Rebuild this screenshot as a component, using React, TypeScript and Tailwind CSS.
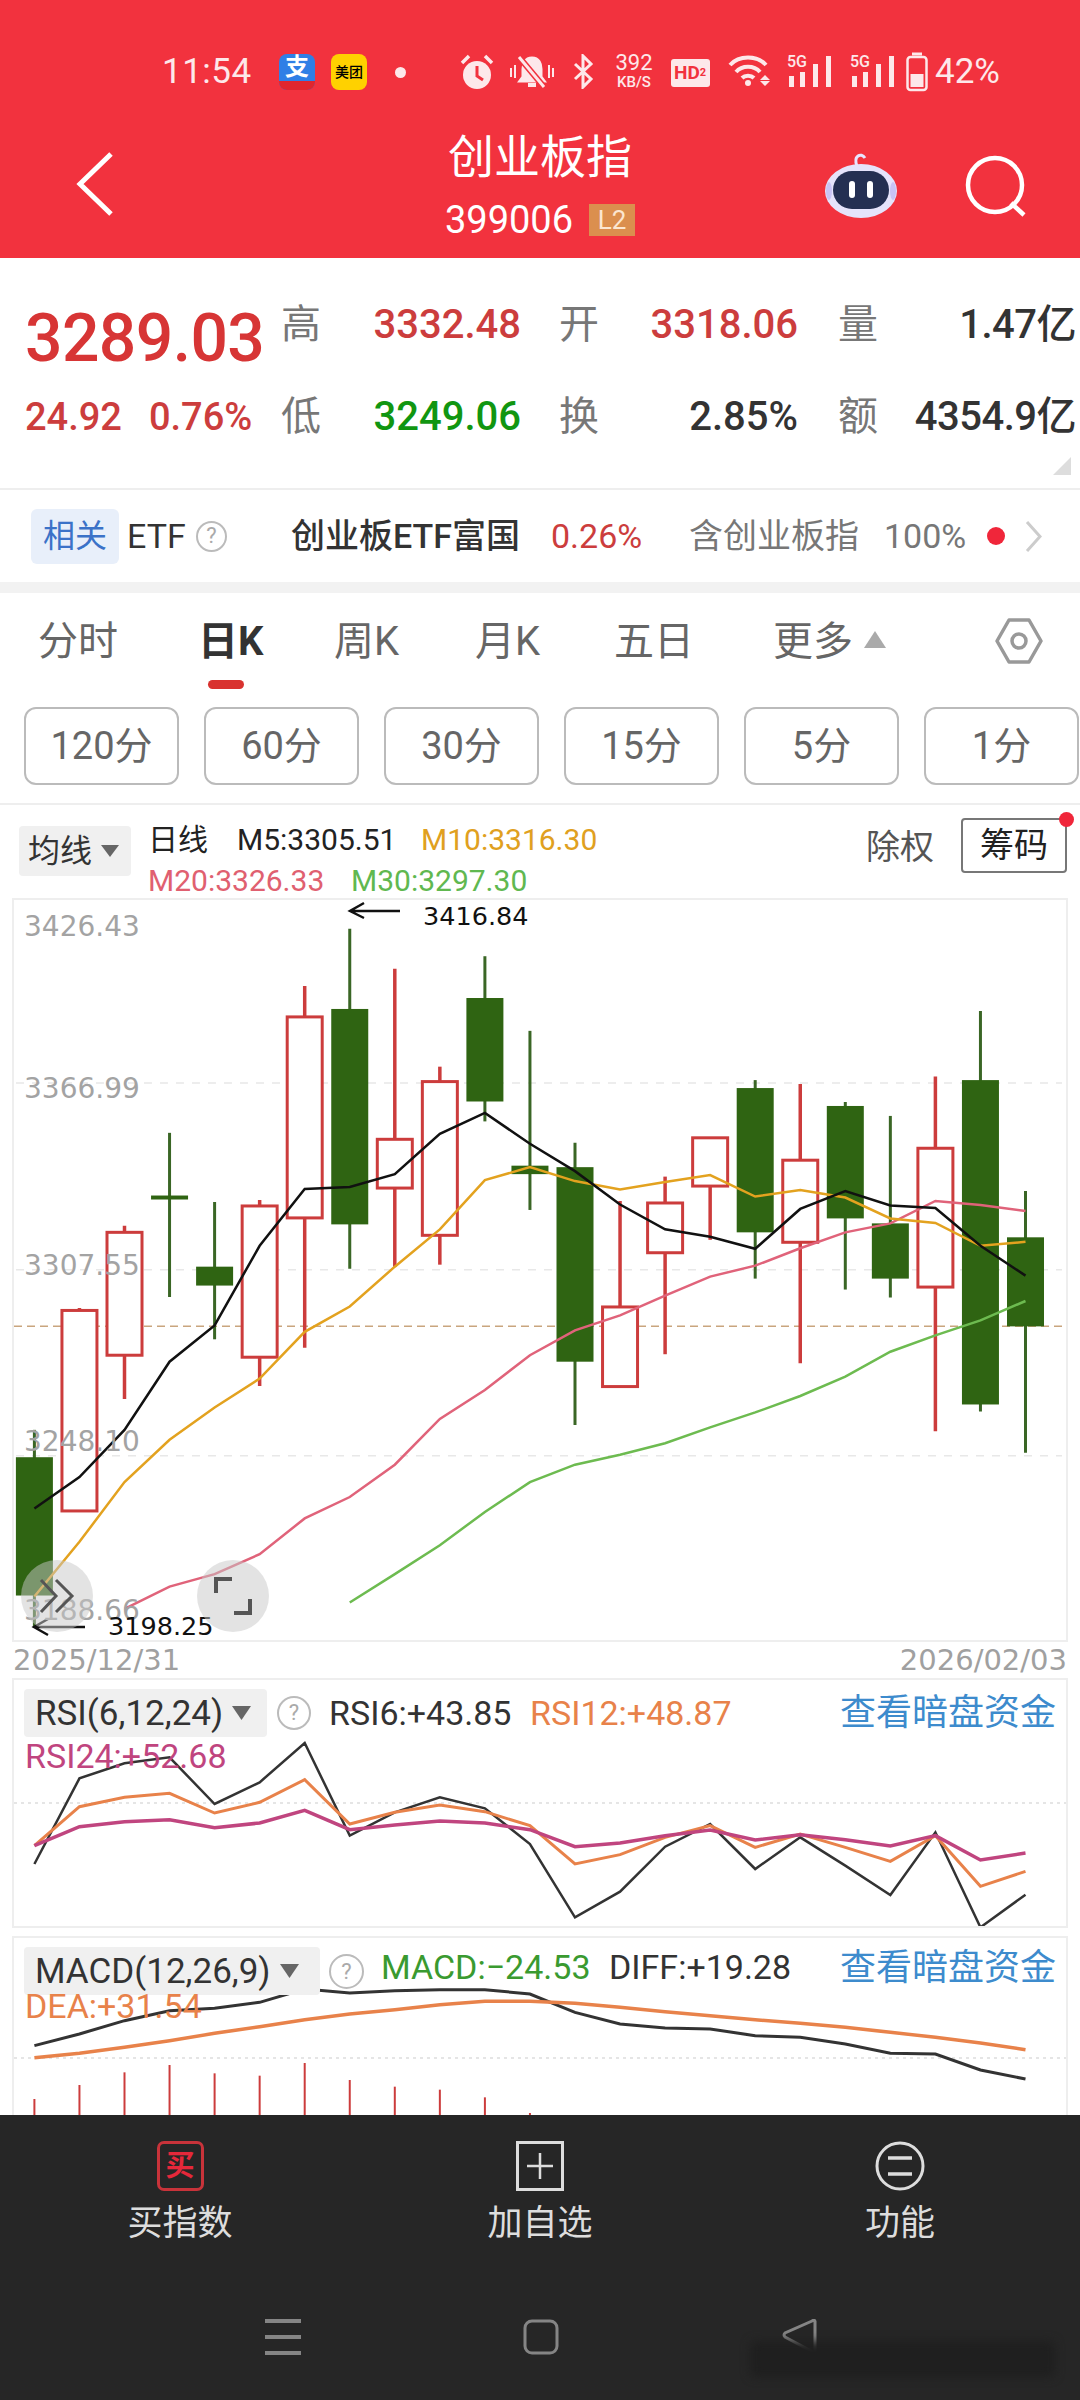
import React from "react";

const cx = (i: number) => 34.4 + 45.05 * i;
const cy = (z: number) => 900 + z / 2.01;

// [open-top, body-bottom, wick-top, wick-bottom, isRed]
const candles: [number, number, number, number, boolean][] = [
  [1120, 1398, 1065, 1463, false],
  [825, 1228, 820, 1228, true],
  [668, 915, 655, 1003, true],
  [594, 602, 468, 798, false],
  [737, 775, 607, 883, false],
  [615, 919, 603, 977, true],
  [235, 639, 173, 900, true],
  [219, 652, 58, 741, false],
  [481, 579, 138, 737, true],
  [365, 674, 335, 733, true],
  [197, 405, 113, 445, false],
  [534, 551, 263, 623, false],
  [537, 928, 488, 1055, false],
  [818, 978, 605, 978, true],
  [609, 709, 556, 913, true],
  [478, 575, 478, 683, true],
  [378, 668, 362, 761, false],
  [523, 688, 370, 931, true],
  [414, 640, 406, 783, false],
  [650, 761, 434, 799, false],
  [499, 778, 355, 1068, true],
  [362, 1014, 223, 1028, false],
  [678, 857, 585, 1111, false],
];

const m5 = [1223, 1160, 1065, 928, 855, 695, 581, 577, 551, 470, 428, 490, 545, 612, 662, 677, 701, 621, 585, 614, 619, 695, 755];
const m10 = [1400, 1290, 1170, 1085, 1020, 962, 868, 817, 737, 662, 563, 537, 565, 582, 567, 553, 596, 583, 598, 640, 649, 695, 687];
const m20 = [1425, 1380, 1355, 1315, 1243, 1200, 1135, 1043, 985, 915, 865, 835, 795, 757, 735, 700, 668, 650, 605, 613, 625];
const m30 = [1412, 1355, 1297, 1230, 1170, 1135, 1115, 1092, 1060, 1030, 997, 958, 908, 875, 845, 806];

const rsi6 = [585, 328, 283, 265, 405, 340, 222, 500, 430, 385, 418, 525, 745, 668, 533, 465, 600, 505, 590, 678, 490, 775, 677];
const rsi12 = [530, 413, 385, 373, 432, 400, 332, 465, 430, 408, 428, 470, 585, 557, 505, 470, 535, 495, 535, 577, 500, 652, 607];
const rsi24 = [530, 473, 458, 452, 476, 462, 424, 482, 468, 456, 462, 482, 533, 522, 500, 483, 513, 497, 512, 531, 500, 573, 552];
const diff = [1130, 1095, 1055, 1025, 1018, 1000, 960, 972, 965, 962, 962, 975, 1030, 1065, 1077, 1080, 1100, 1105, 1125, 1153, 1155, 1203, 1230];
const dea = [1166, 1153, 1135, 1115, 1093, 1073, 1052, 1035, 1022, 1007, 997, 997, 1003, 1015, 1028, 1040, 1052, 1063, 1075, 1090, 1105, 1122, 1142];
const macd = [1290, 1248, 1210, 1188, 1213, 1220, 1182, 1233, 1253, 1262, 1285, 1332];

const OX = 14;
const OY = 900;
const mainPts = (a: number[], start: number) =>
  a.map((z, k) => `${cx(k + start) - OX},${cy(z) - OY}`).join(" ");
const rsiY = (z: number) => 1670 + z / 3 - 1681;
const rsiPts = (a: number[]) => a.map((z, i) => `${cx(i) - OX},${rsiY(z)}`).join(" ");
const macdY = (z: number) => 1670 + z / 3 - 1939;
const macdPts = (a: number[]) => a.map((z, i) => `${cx(i) - OX},${macdY(z)}`).join(" ");

function Help({ size = 32 }: { size?: number }) {
  return (
    <span
      className="flex items-center justify-center rounded-full border-2 border-[#bbbbbb] text-[#aaaaaa] text-[22px] leading-none shrink-0"
      style={{ width: size, height: size }}
    >
      ?
    </span>
  );
}

function StatusBar() {
  return (
    <div className="h-[125px] flex items-start pt-[53px] pl-[162px] text-[#fde8ea]">
      <span className="text-[35px] leading-[38px] w-[117px] tracking-[0.5px]">11:54</span>
      <span className="relative w-[36px] h-[36px] rounded-[8px] bg-[#2f7fe6] overflow-hidden flex justify-center mt-[1px]">
        <span className="text-white text-[24px] leading-[26px] font-bold">支</span>
        <span className="absolute left-0 right-0 bottom-0 h-[9px] bg-[#e0262e]" />
      </span>
      <span className="w-[36px] h-[36px] ml-[16px] rounded-[8px] bg-[#ffd100] text-black text-[14px] leading-[36px] text-center mt-[1px] font-medium">
        美团
      </span>
      <span className="w-[11px] h-[11px] ml-[28px] mt-[14px] rounded-full bg-[#fde8ea]" />
      <svg className="ml-[54px] mt-[1px]" width="34" height="36" viewBox="0 0 34 36" fill="#fde8ea">
        <circle cx="17" cy="21" r="14" />
        <path d="M17 12v10l6 4" stroke="#f2323e" strokeWidth="3" fill="none" />
        <path d="M2 9 L9 2 M32 9 L25 2" stroke="#fde8ea" strokeWidth="3.5" />
      </svg>
      <svg className="ml-[14px] mt-[1px]" width="48" height="36" viewBox="0 0 48 36" fill="none" stroke="#fde8ea" strokeWidth="3">
        <path d="M24 4c-7 0-9 6-9 11v8l-3 4h24l-3-4v-8c0-5-2-11-9-11z" fill="#fde8ea" />
        <path d="M20 31h8" strokeWidth="4" />
        <path d="M11 3 L36 33" stroke="#f2323e" strokeWidth="6" />
        <path d="M11 3 L36 33" />
        <path d="M3 14v9M45 14v9M7 11v13M41 11v13" strokeWidth="2" />
      </svg>
      <svg className="ml-[17px] mt-[1px]" width="21" height="35" viewBox="0 0 21 35" fill="none" stroke="#fde8ea" strokeWidth="3">
        <path d="M2 10 L18 25 L10 33 V2 L18 10 L2 25" />
      </svg>
      <span className="ml-[19px] w-[42px] -mt-[1px] flex flex-col items-center">
        <span className="text-[22px] leading-[21px]">392</span>
        <span className="text-[15px] leading-[15px] mt-[2px] font-medium">KB/S</span>
      </span>
      <span className="ml-[16px] mt-[6px] w-[39px] h-[28px] rounded-[3px] bg-[#fde8ea] text-[#f2323e] text-[19px] leading-[28px] font-bold pl-[3px]">
        HD<span className="text-[11px] align-top">2</span>
      </span>
      <svg className="ml-[18px] mt-[1px]" width="44" height="33" viewBox="0 0 44 33" fill="none" stroke="#fde8ea" strokeWidth="4">
        <path d="M2 11 C11 1 29 1 38 11" />
        <path d="M8 18 C14 11 26 11 32 18" />
        <path d="M14 24 C17 21 23 21 26 24" />
        <circle cx="20" cy="29" r="3" fill="#fde8ea" stroke="none" />
        <path d="M36 21l5 5h-10z M36 32l5-5h-10z" fill="#fde8ea" stroke="none" transform="translate(1 0)" />
      </svg>
      {[0, 1].map((k) => (
        <span key={k} className={`relative w-[46px] h-[33px] ${k === 0 ? "ml-[15px]" : "ml-[17px]"} mt-[1px]`}>
          <span className="absolute left-0 top-0 text-[16px] leading-[16px] font-medium">5G</span>
          <svg className="absolute inset-0" width="46" height="33" viewBox="0 0 46 33" fill="#fde8ea">
            <rect x="2" y="22" width="5" height="11" />
            <rect x="13" y="18" width="5" height="15" />
            <rect x="26" y="10" width="5" height="23" />
            <rect x="39" y="2" width="5" height="31" />
          </svg>
        </span>
      ))}
      <svg className="ml-[10px] -mt-[1px]" width="22" height="40" viewBox="0 0 22 40" fill="none" stroke="#fde8ea" strokeWidth="2.5">
        <rect x="1.5" y="5" width="19" height="33" rx="3" />
        <path d="M6 2h10" strokeWidth="3" />
        <rect x="4.5" y="22" width="13" height="13" fill="#fde8ea" stroke="none" />
      </svg>
      <span className="ml-[7px] text-[35px] leading-[38px]">42%</span>
    </div>
  );
}

function Robot() {
  return (
    <svg width="72" height="66" viewBox="0 0 72 66">
      <path d="M32 14 C28 4 36 0 40 6" stroke="#e8e4ff" strokeWidth="3" fill="none" />
      <ellipse cx="36" cy="39" rx="36" ry="27" fill="#e5e3fb" />
      <ellipse cx="4" cy="39" rx="3" ry="9" fill="#c9c3f5" />
      <ellipse cx="68" cy="39" rx="3" ry="9" fill="#c9c3f5" />
      <rect x="8" y="19" width="56" height="38" rx="19" fill="#242f52" />
      <rect x="24" y="29" width="6" height="17" rx="3" fill="#ffffff" />
      <rect x="42" y="29" width="6" height="17" rx="3" fill="#ffffff" />
    </svg>
  );
}

function Header() {
  return (
    <div className="h-[258px] bg-[#f2323e] shrink-0 flex flex-col">
      <StatusBar />
      <div className="relative flex-1 flex flex-col items-center text-white">
        <span className="text-[46px] leading-[52px] mt-[6px] -translate-x-[0px]">创业板指</span>
        <div className="flex items-center gap-[16px] mt-[19px] ml-[0px]">
          <span className="text-[38px] leading-[36px]">399006</span>
          <span className="w-[46px] h-[32px] bg-[#db8f4e] text-[#fbe6d0] text-[26px] leading-[32px] text-center">L2</span>
        </div>
        <svg className="absolute left-[75px] top-[26px]" width="40" height="66" viewBox="0 0 40 66" fill="none" stroke="#fff" strokeWidth="5">
          <path d="M36 3 L5 33 L36 63" />
        </svg>
        <div className="absolute left-[825px] top-[27px]">
          <Robot />
        </div>
        <svg className="absolute left-[964px] top-[30px]" width="64" height="62" viewBox="0 0 64 62" fill="none" stroke="#fff" strokeWidth="4.5">
          <circle cx="31" cy="30" r="27" />
          <path d="M47 48 L60 60" />
        </svg>
      </div>
    </div>
  );
}

function Stats() {
  const label = "text-[40px] leading-none text-[#777777]";
  const val = "text-[40px] leading-none font-medium text-right";
  return (
    <div className="relative h-[232px] border-b-2 border-[#eeeeee] shrink-0 pt-[21px]">
      <div className="grid grid-cols-[281px_60px_180px_78px_199px_81px_198px] grid-rows-[92px_92px] items-center">
        <span className="pl-[25px] text-[66px] leading-none font-medium text-[#d73535] mt-[27px] tracking-[-0.6px]">3289.03</span>
        <span className={label}>高</span>
        <span className={`${val} text-[#cc3d3d]`}>3332.48</span>
        <span className={`${label} pl-[38px]`}>开</span>
        <span className={`${val} text-[#cc3d3d]`}>3318.06</span>
        <span className={`${label} pl-[40px]`}>量</span>
        <span className={`${val} text-[#333333] pr-[1px] -tracking-[0.5px]`}>1.47亿</span>

        <span className="pl-[25px] text-[38px] leading-none text-[#cc3d3d] font-medium whitespace-nowrap flex gap-[27px]">
          <span>24.92</span>
          <span>0.76%</span>
        </span>
        <span className={label}>低</span>
        <span className={`${val} text-[#119611]`}>3249.06</span>
        <span className={`${label} pl-[38px]`}>换</span>
        <span className={`${val} text-[#333333]`}>2.85%</span>
        <span className={`${label} pl-[40px]`}>额</span>
        <span className={`${val} text-[#333333] pr-[1px] -tracking-[0.5px]`}>4354.9亿</span>
      </div>
      <svg className="absolute right-[9px] bottom-[13px]" width="18" height="18" viewBox="0 0 18 18">
        <path d="M18 0 V18 H0 Z" fill="#dddddd" />
      </svg>
    </div>
  );
}

function EtfRow() {
  return (
    <div className="h-[92px] flex items-center shrink-0 text-[34px] leading-none pl-[31px]">
      <span className="w-[88px] h-[55px] rounded-[6px] bg-[#e8effa] text-[#3b72c8] text-center leading-[55px] text-[32px]">相关</span>
      <span className="ml-[8px] text-[#333333] w-[61px]">ETF</span>
      <span className="ml-[8px]"><Help size={31} /></span>
      <span className="ml-[64px] w-[237px] text-[#333333] whitespace-nowrap font-medium">创业板ETF富国</span>
      <span className="ml-[23px] w-[98px] text-[#cc3d3d]">0.26%</span>
      <span className="ml-[40px] text-[#777777] w-[175px]">含创业板指</span>
      <span className="ml-[20px] text-[#777777] w-[89px]">100%</span>
      <span className="ml-[14px] w-[18px] h-[18px] rounded-full bg-[#f0263a]" />
      <svg className="ml-[20px]" width="17" height="33" viewBox="0 0 17 33" fill="none" stroke="#cccccc" strokeWidth="3">
        <path d="M2 2 L15 16.5 L2 31" />
      </svg>
    </div>
  );
}

function Tabs() {
  const t = "text-[40px] leading-none text-[#666666] whitespace-nowrap";
  return (
    <div className="h-[114px] shrink-0 flex items-start pt-[29px] pl-[38px] relative">
      <span className={`${t} w-[160px]`}>分时</span>
      <span className={`text-[40px] leading-none font-bold text-[#333333] w-[136px]`}>日K</span>
      <span className={`${t} w-[141px]`}>周K</span>
      <span className={`${t} w-[139px]`}>月K</span>
      <span className={`${t} w-[159px]`}>五日</span>
      <span className={`${t}`}>更多</span>
      <svg className="ml-[11px] mt-[9px]" width="22" height="17" viewBox="0 0 22 17"><path d="M11 0 L22 17 H0 Z" fill="#aaaaaa" /></svg>
      <svg className="ml-[109px] -mt-[4px]" width="48" height="46" viewBox="0 0 48 46" fill="none" stroke="#999999" strokeWidth="3.5">
        <path d="M14 2 H34 L46 23 L34 44 H14 L2 23 Z" strokeLinejoin="round" />
        <circle cx="24" cy="23" r="7" />
      </svg>
      <span className="absolute left-[208px] top-[87px] w-[36px] h-[9px] rounded-full bg-[#d9322f]" />
    </div>
  );
}

function Periods() {
  return (
    <div className="h-[98px] shrink-0 border-b-2 border-[#eeeeee] flex gap-[25px] pl-[24px] overflow-hidden">
      {["120分", "60分", "30分", "15分", "5分", "1分"].map((s) => (
        <span
          key={s}
          className="w-[155px] h-[78px] shrink-0 rounded-[12px] border-2 border-[#bbbbbb] text-[#666666] text-[38px] leading-[74px] text-center"
        >
          {s}
        </span>
      ))}
    </div>
  );
}

function Legend() {
  return (
    <div className="h-[93px] shrink-0 flex items-start pl-[19px] relative">
      <div className="mt-[21px] w-[112px] h-[50px] rounded-[4px] bg-[#f0f0f0] flex items-center pl-[9px] gap-[9px] text-[32px] leading-none text-[#333333]">
        <span>均线</span>
        <svg width="18" height="12" viewBox="0 0 18 12"><path d="M0 0 H18 L9 12 Z" fill="#666666" /></svg>
      </div>
      <div className="ml-[17px] mt-[14px] flex flex-col text-[30px] leading-[41px] whitespace-nowrap">
        <div className="flex">
          <span className="text-[#222222] w-[89px]">日线</span>
          <span className="text-[#222222] w-[184px]">M5:3305.51</span>
          <span className="text-[#e0a020]">M10:3316.30</span>
        </div>
        <div className="flex">
          <span className="text-[#e06070] w-[203px]">M20:3326.33</span>
          <span className="text-[#60b850]">M30:3297.30</span>
        </div>
      </div>
      <span className="absolute left-[866px] top-[22px] text-[34px] leading-[40px] text-[#555555]">除权</span>
      <span className="absolute left-[961px] top-[13px] w-[106px] h-[55px] rounded-[4px] border-2 border-[#777777] text-[34px] leading-[51px] text-center text-[#222222]">
        筹码
      </span>
      <span className="absolute left-[1059px] top-[7px] w-[15px] h-[15px] rounded-full bg-[#f0263a]" />
    </div>
  );
}

function MainChart() {
  const labels: [string, number][] = [
    ["3426.43", 927],
    ["3366.99", 1089],
    ["3307.55", 1266],
    ["3248.10", 1442],
    ["3188.66", 1611],
  ];
  return (
    <div className="relative ml-[12px] w-[1056px] h-[744px] shrink-0 border-2 border-[#eeeeee] [font-family:'DejaVu_Sans',sans-serif]">
      <svg className="absolute inset-0" width="1052" height="740" viewBox="0 0 1052 740">
        {[368, 743, 1117].map((z) => (
          <line key={z} x1="2" x2="1048" y1={cy(z) - OY} y2={cy(z) - OY} stroke="#e8e8e8" strokeWidth="1.5" strokeDasharray="8 8" />
        ))}
        <line x1="0" x2="1048" y1={cy(857) - OY} y2={cy(857) - OY} stroke="#c9a57e" strokeWidth="1.5" strokeDasharray="8 5" />
        {candles.map(([a, b, h, l, red], i) => {
          const x = cx(i) - OX;
          const color = red ? "#cc3c3c" : "#2f6412";
          return (
            <g key={i}>
              <line x1={x} x2={x} y1={cy(h) - OY} y2={cy(l) - OY} stroke={red ? "#cc3c3c" : "#3a6625"} strokeWidth={red ? 3.5 : 3} />
              <rect
                x={x - (red ? 17.5 : 18.5)}
                y={cy(a) - OY}
                width={red ? 35 : 37}
                height={cy(b) - cy(a)}
                fill={red ? "#ffffff" : color}
                stroke={red ? color : "none"}
                strokeWidth={red ? 3 : 0}
              />
            </g>
          );
        })}
        <polyline points={mainPts(m30, 7)} fill="none" stroke="#6dbb50" strokeWidth="2.5" />
        <polyline points={mainPts(m20, 2)} fill="none" stroke="#e0637a" strokeWidth="2.5" />
        <polyline points={mainPts(m10, 0)} fill="none" stroke="#e3a21f" strokeWidth="2.5" />
        <polyline points={mainPts(m5, 0)} fill="none" stroke="#111111" strokeWidth="2.5" />
        <g stroke="#111111" fill="none" strokeWidth="2.5">
          <path d="M336 11 H386 M350 3 L336 11 L350 18" />
          <path d="M20 727 H71 M34 719 L20 727 L34 735" />
        </g>
      </svg>
      {labels.map(([s, y]) => (
        <span
          key={s}
          className="absolute left-[10px] text-[28px] leading-none text-[#a3a3a3]"
          style={{ top: y - 900 - 14 }}
        >
          {s}
        </span>
      ))}
      <span className="absolute left-[409px] top-[4px] text-[25.5px] leading-none text-[#111111]">3416.84</span>
      <span className="absolute left-[94px] top-[714px] text-[25.5px] leading-none text-[#111111]">3198.25</span>
      <span className="absolute left-[7px] top-[660px] w-[72px] h-[72px] rounded-full bg-[#c8c8c8]/50 flex items-center justify-center">
        <svg width="36" height="36" viewBox="0 0 36 36" fill="none" stroke="#555555" strokeWidth="3">
          <path d="M2 2 L17 18 L2 34 M17 2 L33 18 L17 34" />
        </svg>
      </span>
      <span className="absolute left-[183px] top-[660px] w-[72px] h-[72px] rounded-full bg-[#c8c8c8]/50 flex items-center justify-center">
        <svg width="38" height="38" viewBox="0 0 38 38" fill="none" stroke="#555555" strokeWidth="4">
          <path d="M2 16 V2 H18 M36 22 V36 H20" />
        </svg>
      </span>
    </div>
  );
}

function Panels() {
  return (
    <>
      <div className="h-[36px] shrink-0 flex justify-between px-[13px] text-[29px] leading-[36px] text-[#a0a0a0] [font-family:'DejaVu_Sans',sans-serif]">
        <span>2025/12/31</span>
        <span>2026/02/03</span>
      </div>
      <div className="relative ml-[12px] w-[1056px] h-[250px] shrink-0 border-2 border-[#eeeeee]">
        <svg className="absolute inset-0" width="1052" height="246" viewBox="0 0 1052 246">
          <line x1="0" x2="1052" y1={rsiY(402)} y2={rsiY(402)} stroke="#dddddd" strokeWidth="1.5" strokeDasharray="3 4" />
          <polyline points={rsiPts(rsi6)} fill="none" stroke="#333333" strokeWidth="2.5" />
          <polyline points={rsiPts(rsi12)} fill="none" stroke="#e8824a" strokeWidth="3" />
          <polyline points={rsiPts(rsi24)} fill="none" stroke="#c0457f" strokeWidth="3.5" />
        </svg>
        <div className="absolute left-[10px] top-[9px] right-[10px] flex items-center h-[48px] text-[34px] leading-none whitespace-nowrap">
          <span className="w-[243px] h-[48px] rounded-[4px] bg-[#f0f0f0] flex items-center pl-[11px] text-[#333333] text-[35px]">
            RSI(6,12,24)
            <svg className="ml-[9px]" width="19" height="14" viewBox="0 0 19 14"><path d="M0 0 H19 L9.5 14 Z" fill="#666666" /></svg>
          </span>
          <span className="ml-[10px]"><Help size={34} /></span>
          <span className="ml-[18px] text-[#333333] w-[201px]">RSI6:+43.85</span>
          <span className="text-[#e8824a]">RSI12:+48.87</span>
          <span className="ml-auto text-[36px] text-[#3d8bcd]">查看暗盘资金</span>
        </div>
        <span className="absolute left-[11px] top-[56px] text-[34px] leading-[40px] text-[#c0457f]">RSI24:+52.68</span>
      </div>
      <div className="relative ml-[12px] mt-[8px] w-[1056px] h-[190px] shrink-0 border-x-2 border-t-2 border-[#eeeeee]">
        <svg className="absolute inset-0" width="1052" height="188" viewBox="0 0 1052 188">
          <line x1="0" x2="1052" y1={macdY(1167)} y2={macdY(1167)} stroke="#dddddd" strokeWidth="1.5" strokeDasharray="3 4" />
          {macd.map((z, i) => (
            <line key={i} x1={cx(i) - OX} x2={cx(i) - OX} y1={macdY(z)} y2="188" stroke="#cc3c3c" strokeWidth="2" />
          ))}
          <polyline points={macdPts(diff)} fill="none" stroke="#333333" strokeWidth="3" />
          <polyline points={macdPts(dea)} fill="none" stroke="#e8824a" strokeWidth="3.5" />
        </svg>
        <div className="absolute left-[10px] top-[9px] right-[10px] flex items-start h-[48px] text-[34px] leading-none whitespace-nowrap">
          <span className="w-[296px] h-[48px] rounded-[4px] bg-[#f0f0f0] flex items-center pl-[11px] text-[#333333] text-[35px]">
            MACD(12,26,9)
            <svg className="ml-[9px]" width="19" height="14" viewBox="0 0 19 14"><path d="M0 0 H19 L9.5 14 Z" fill="#666666" /></svg>
          </span>
          <span className="ml-[9px] mt-[7px]"><Help size={35} /></span>
          <span className="ml-[17px] mt-[3px] text-[#3a9a30] w-[228px]">MACD:−24.53</span>
          <span className="mt-[3px] text-[#333333]">DIFF:+19.28</span>
          <span className="ml-auto text-[36px] text-[#3d8bcd] mt-[3px]">查看暗盘资金</span>
        </div>
        <span className="absolute left-[11px] top-[48px] text-[34px] leading-[40px] text-[#e8824a]">DEA:+31.54</span>
      </div>
    </>
  );
}

function BottomBar() {
  return (
    <div className="relative h-[285px] shrink-0 bg-[#262626] flex flex-col">
      <div className="grid grid-cols-3 pt-[26px] text-[35px] leading-none text-[#dddddd]">
        <div className="flex flex-col items-center gap-[15px]">
          <span className="w-[47px] h-[50px] rounded-[7px] border-[3px] border-[#c8333a] text-[#e5283a] text-[29px] font-bold leading-[44px] text-center">买</span>
          <span>买指数</span>
        </div>
        <div className="flex flex-col items-center gap-[15px]">
          <svg width="48" height="50" viewBox="0 0 48 50" fill="none" stroke="#dddddd">
            <rect x="1.5" y="1.5" width="45" height="47" strokeWidth="3" />
            <path d="M24 12 V38 M11 25 H37" strokeWidth="2.5" />
          </svg>
          <span>加自选</span>
        </div>
        <div className="flex flex-col items-center gap-[15px]">
          <svg width="50" height="50" viewBox="0 0 50 50" fill="none" stroke="#dddddd" strokeWidth="3">
            <circle cx="25" cy="25" r="23" />
            <path d="M13 17 H37 M13 33 H37" strokeWidth="3.5" />
          </svg>
          <span>功能</span>
        </div>
      </div>
      <div className="flex items-start pl-[265px] mt-[78px]">
        <svg width="36" height="36" viewBox="0 0 36 36" fill="#858585">
          <rect x="0" y="0" width="36" height="4" />
          <rect x="0" y="16" width="36" height="4" />
          <rect x="0" y="32" width="36" height="4" />
        </svg>
        <svg className="ml-[222px]" width="36" height="36" viewBox="0 0 36 36" fill="none" stroke="#858585" strokeWidth="3">
          <rect x="2" y="2" width="32" height="32" rx="7" />
        </svg>
        <svg className="ml-[223px]" width="36" height="36" viewBox="0 0 36 36" fill="none" stroke="#858585" strokeWidth="3">
          <path d="M33 2 V34 L3 18 Q1 16 3 14 L30 2 Q33 0 33 3 Z" />
        </svg>
      </div>
      <div className="absolute left-[750px] top-[226px] w-[305px] h-[36px] bg-[#1f1f1f] blur-[5px] rounded-[6px]" />
    </div>
  );
}

export default function App() {
  return (
    <div className="w-[1080px] h-[2400px] bg-white flex flex-col overflow-hidden [font-family:Roboto,'Noto_Sans_CJK_SC',sans-serif]">
      <Header />
      <div className="flex-1 min-h-0 overflow-hidden flex flex-col">
        <Stats />
        <EtfRow />
        <div className="h-[11px] bg-[#f2f2f2] shrink-0" />
        <Tabs />
        <Periods />
        <Legend />
        <MainChart />
        <Panels />
      </div>
      <BottomBar />
    </div>
  );
}
